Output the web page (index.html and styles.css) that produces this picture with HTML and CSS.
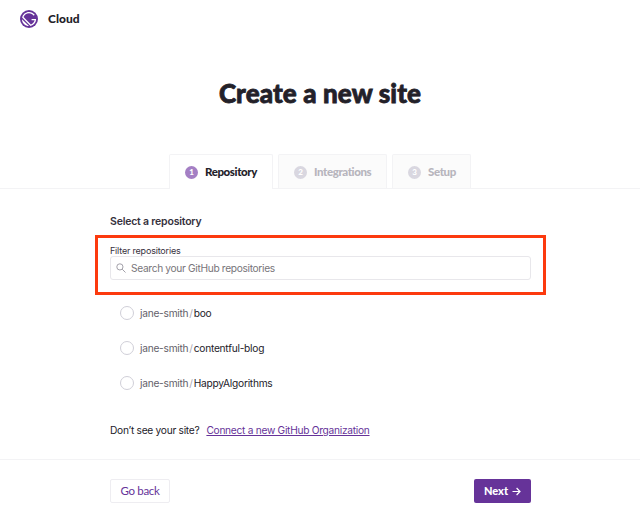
FILE: index.html
```html
<!DOCTYPE html>
<html lang="en">
<head>
<meta charset="utf-8">
<title>Create a new site</title>
<link rel="stylesheet" href="styles.css">
</head>
<body>
<header class="brand">
  <svg class="logo" viewBox="0 0 28 28" aria-hidden="true">
    <circle cx="14" cy="14" r="14" fill="#663399"/>
    <path d="M6.2 21.8C4.1 19.7 3 16.9 3 14.2l10.9 10.8c-2.8-.1-5.6-1.1-7.7-3.2zM16.4 24.7 3.3 11.6C4.4 6.7 8.8 3 14 3c3.7 0 6.9 1.8 8.9 4.500l-1.500 1.300C19.700 6.500 17 5 14 5c-3.900 0-7.200 2.500-8.500 6L17 22.500c2.900-1 5.100-3.500 5.800-6.500H18v-2h7c0 5.200-3.700 9.600-8.600 10.700z" fill="#fff"/>
  </svg>
  <span class="brand-name">Cloud</span>
</header>
<h1 class="title">Create a new site</h1>
<nav class="tabs">
  <div class="tab tab-active"><span class="step">1</span><span class="tab-name">Repository</span></div>
  <div class="tab tab-integrations"><span class="step">2</span><span class="tab-name">Integrations</span></div>
  <div class="tab tab-setup"><span class="step">3</span><span class="tab-name">Setup</span></div>
</nav>
<main class="content">
  <h2 class="section-title">Select a repository</h2>
  <section class="filter">
    <label class="filter-label" for="search">Filter repositories</label>
    <div class="search">
      <svg class="search-icon" viewBox="0 0 10 10" fill="none" stroke="#a19fa8" stroke-width="1" aria-hidden="true"><circle cx="3.900" cy="3.900" r="3.100"/><path d="M6.200 6.200 9.500 9.500"/></svg>
      <input id="search" class="search-input" type="text" placeholder="Search your GitHub repositories">
    </div>
  </section>
  <ul class="repos">
    <li class="repo"><span class="radio"></span><span class="owner">jane-smith</span><span class="slash">/</span><span>boo</span></li>
    <li class="repo"><span class="radio"></span><span class="owner">jane-smith</span><span class="slash">/</span><span>contentful-blog</span></li>
    <li class="repo"><span class="radio"></span><span class="owner">jane-smith</span><span class="slash">/</span><span>HappyAlgorithms</span></li>
  </ul>
  <p class="help"><span>Don’t see your site?</span><a class="connect" href="#">Connect a new GitHub Organization</a></p>
</main>
<footer class="actions">
  <button class="button back">Go back</button>
  <button class="button next">Next
    <svg class="arrow" viewBox="0 0 9 9" fill="none" stroke="#fff" stroke-width="1.200" aria-hidden="true"><path d="M.5 4.500H8M4.600 1 8 4.500 4.600 8"/></svg>
  </button>
</footer>
</body>
</html>
```
FILE: styles.css
```css
* { box-sizing: border-box; }
body {
  margin: 0;
  height: 518px;
  overflow: hidden;
  background: #fff;
  color: #232129;
  font-family: Inter, "Liberation Sans", sans-serif;
  font-size: 10px;
}
.brand { display: flex; align-items: center; height: 38px; padding-left: 20px; }
.logo { width: 18px; height: 18px; }
.brand-name { margin-left: 10px; font: 900 12px/16px Lato, sans-serif; }
.title { margin: 38px 0 0; height: 78px; text-align: center; font: 900 26px/34px Lato, sans-serif; letter-spacing: .13px; -webkit-text-stroke: .8px #232129; }
.tabs { display: flex; gap: 5px; height: 35px; padding-left: 169px; border-bottom: 1px solid #f3f3f5; }
.tab {
  display: flex;
  align-items: center;
  height: 34px;
  padding: 1px 0 0 15px;
  border: 1px solid #f3f3f5;
  border-bottom: 0;
  border-radius: 2px 2px 0 0;
  background: #fbfbfb;
  color: #b7b5bd;
  font: 900 11.500px/16px Lato, sans-serif;
}
.tab-name { letter-spacing: -.4px; }
.tab-active { width: 104px; height: 35px; padding-bottom: 1px; background: #fff; color: #232129; }
.tab-integrations { width: 109px; }
.tab-setup { width: 79px; }
.step {
  width: 13px;
  height: 13px;
  margin-right: 7px;
  border-radius: 50%;
  background: #d9d7e0;
  color: #fff;
  text-align: center;
  font-size: 8px;
  line-height: 13px;
}
.tab-active .step { background: #a47fc4; }
.content { height: 270px; padding: 26px 95px 0; }
.section-title { margin: 0 0 0 15px; height: 20px; font-size: 10.500px; line-height: 14px; font-weight: 600; letter-spacing: -.2px; color: #36313d; }
.filter { width: 451px; height: 60px; padding: 7px 12px 0; border: 3px solid #fc3a0e; }
.filter-label { display: block; height: 11px; font-size: 9px; line-height: 11px; letter-spacing: -.19px; color: #36313d; }
.search { display: flex; align-items: center; height: 24px; padding-left: 5px; border: 1px solid #e8e7eb; border-radius: 3px; }
.search-icon { width: 10px; height: 10px; margin-right: 5px; }
.search-input { flex: 1; padding: 0; border: 0; outline: 0; background: none; font: 10.200px/16px Inter, sans-serif; letter-spacing: -.33px; }
.search-input::placeholder { color: #78757a; opacity: 1; }
.repos { margin: 0; padding: 0 0 0 25px; list-style: none; }
.repo { display: flex; align-items: center; height: 35px; font-size: 10.200px; letter-spacing: -.26px; }
.radio { width: 14px; height: 14px; margin-right: 6px; border: 1px solid #d0cfd8; border-radius: 50%; }
.owner { color: #635e69; }
.slash { margin: 0 1px; color: #a9a6af; }
.help { display: flex; gap: 7px; margin: 22px 0 0 15px; font-size: 10.200px; line-height: 16px; letter-spacing: -.28px; }
.connect { color: #663399; text-underline-offset: 1px; text-decoration-thickness: 1px; }
.actions { display: flex; justify-content: space-between; height: 59px; padding: 19px 109px 0 110px; border-top: 1px solid #f3f3f5; }
.button { display: flex; align-items: center; justify-content: center; height: 24px; padding: 0; border-radius: 2px; }
.back { width: 60px; border: 1px solid #eeedf1; background: #fff; color: #663399; font: 400 11.500px/16px Lato, sans-serif; letter-spacing: -.35px; }
.next { width: 57px; gap: 4px; border: 0; background: #663399; color: #fff; font: 900 11px/16px Lato, sans-serif; }
.arrow { width: 9px; height: 9px; }
```
